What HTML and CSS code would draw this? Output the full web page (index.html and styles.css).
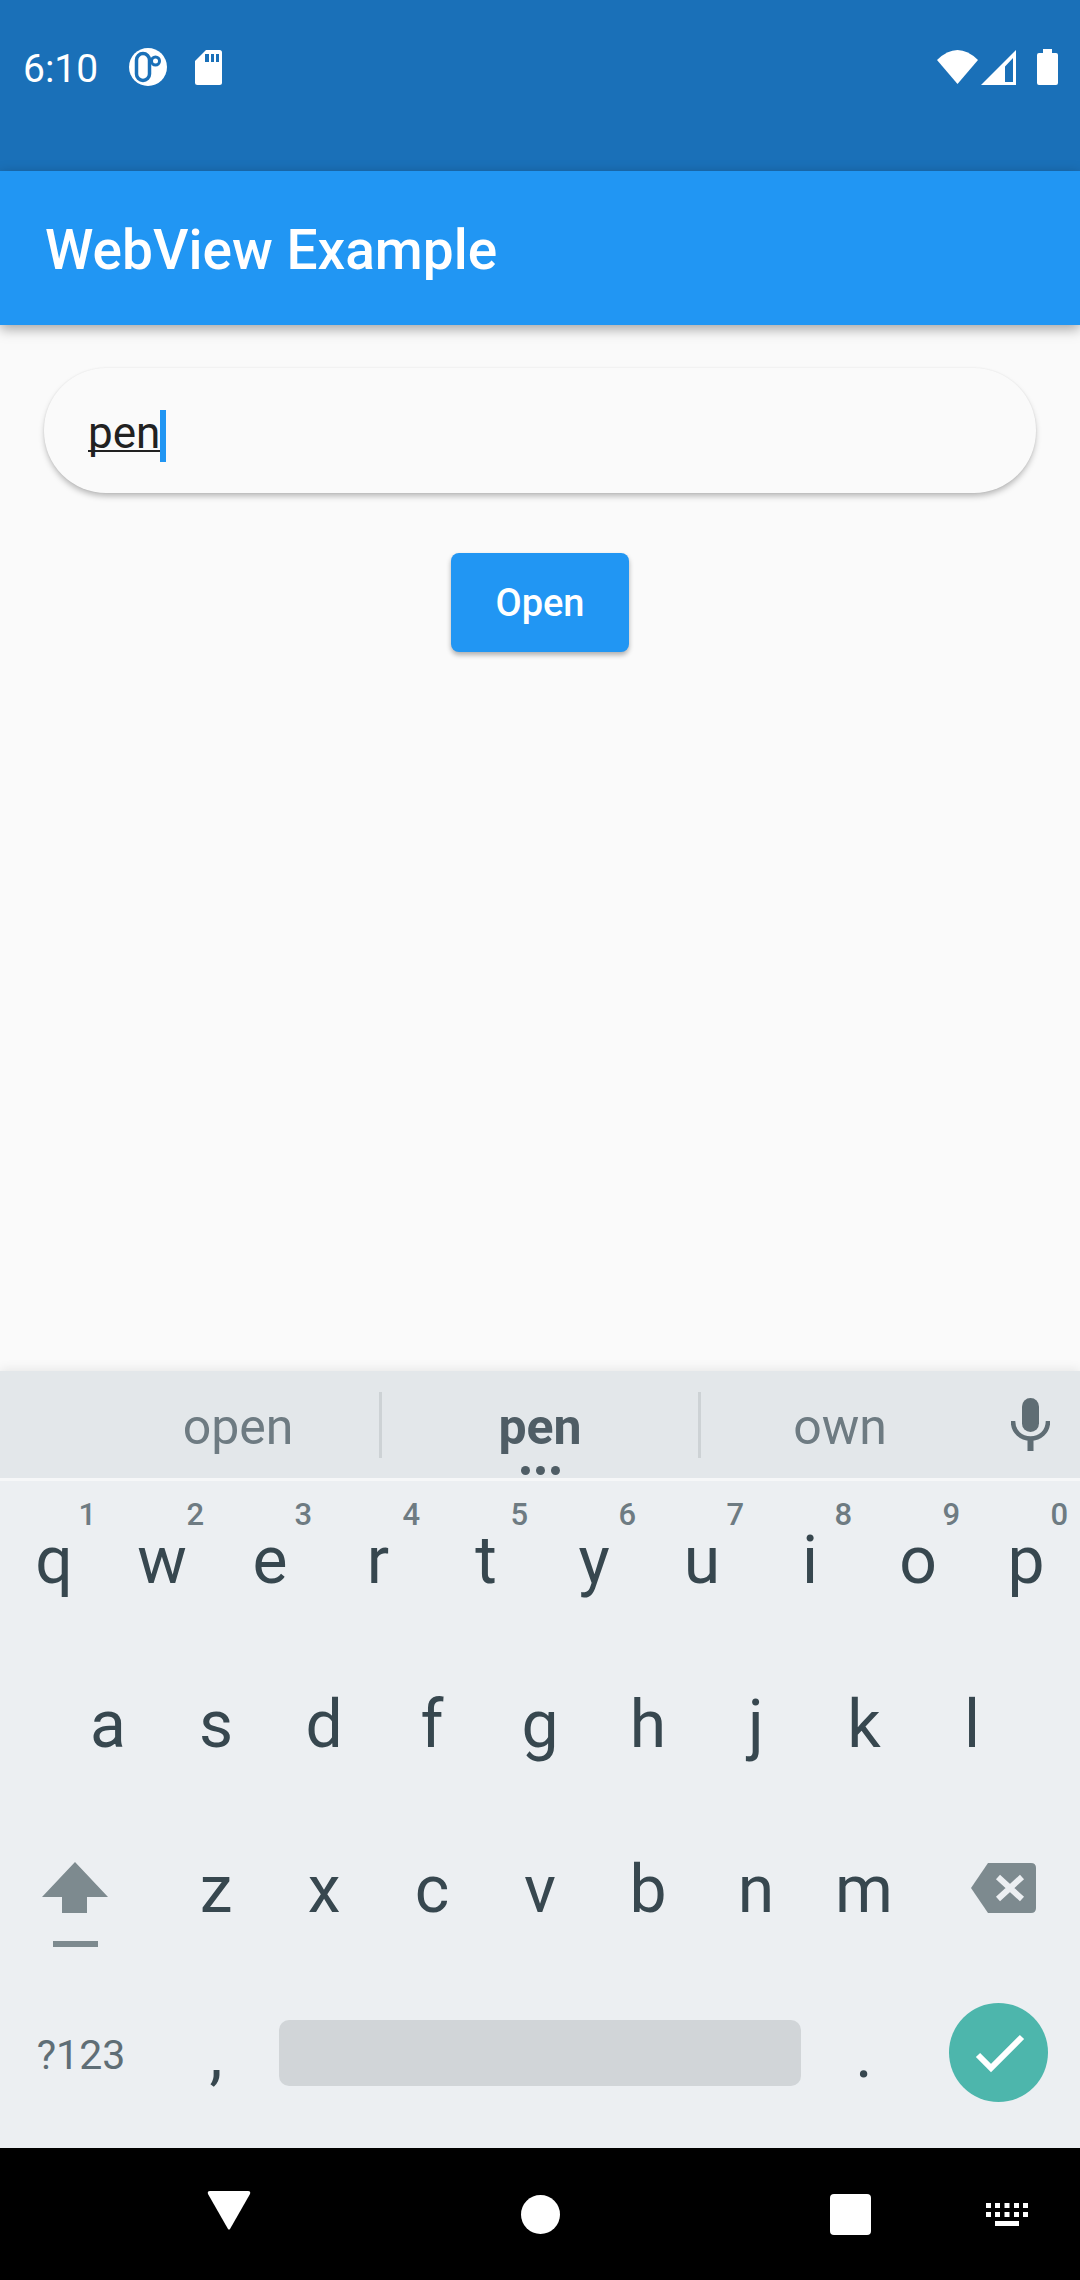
FILE: index.html
```html
<!DOCTYPE html>
<html>
<head>
<title>WebView Example</title>
<meta charset="UTF-8">
<link rel="stylesheet" href="styles.css">
</head>
<body>
<div class="screen">

<header class="statusbar">
  <span class="clock">6:10</span>
  <svg class="st-app" width="38" height="38" viewBox="0 0 38 38">
    <circle cx="19" cy="19" r="19" fill="#fff"/>
    <rect x="7.500" y="5.500" width="13" height="27" rx="6.500" fill="#fff" stroke="#1a70b8" stroke-width="3.500"/>
    <circle cx="26.500" cy="13" r="5.500" fill="#1a70b8"/>
    <circle cx="26.500" cy="13" r="2.500" fill="#fff"/>
  </svg>
  <svg class="st-sd" width="27" height="35" viewBox="0 0 27 35">
    <path d="M11 0H24.500Q27 0 27 2.500V32.500Q27 35 24.500 35H2.500Q0 35 0 32.500V11Z" fill="#fff"/>
    <path d="M10 4h4v8h-4zM16 4h3v8h-3zM21 4h3v8h-3z" fill="#1a70b8"/>
  </svg>
  <span class="spacer"></span>
  <svg class="st-wifi" width="41" height="34" viewBox="0 0 41 34">
    <path d="M0 10Q20.500 -10 41 10L20.500 34Z" fill="#fff"/>
  </svg>
  <svg class="st-signal" width="35" height="35" viewBox="0 0 35 35">
    <path fill-rule="evenodd" d="M35 0V35H0ZM32 8L24 16.500V32H32Z" fill="#fff"/>
  </svg>
  <svg class="st-batt" width="21" height="36" viewBox="0 0 21 36">
    <path d="M6 0H15V4H19Q21 4 21 6V34Q21 36 19 36H2Q0 36 0 34V6Q0 4 2 4H6Z" fill="#fff"/>
  </svg>
</header>

<div class="appbar">WebView Example</div>

<main class="content">
  <div class="searchbox"><span class="typed">pen</span><span class="caret"></span></div>
  <div class="btn-open">Open</div>
</main>

<section class="keyboard">
  <div class="suggestions">
    <div class="sug sug-first">open</div>
    <div class="sug sug-main">pen<span class="dots"><i></i><i></i><i></i></span></div>
    <div class="sug sug-last">own</div>
    <svg class="mic" width="39" height="53" viewBox="0 0 39 53">
      <rect x="11" y="0" width="17" height="34" rx="8.500" fill="#5f6d74"/>
      <path d="M2 23C2 34 10 40.500 19.500 40.500S37 34 37 23" fill="none" stroke="#5f6d74" stroke-width="4.500"/>
      <rect x="16.500" y="40" width="6" height="13" fill="#5f6d74"/>
    </svg>
  </div>
  <div class="keys">
    <div class="row row-top">
      <div class="key">q<b>1</b></div><div class="key">w<b>2</b></div><div class="key">e<b>3</b></div><div class="key">r<b>4</b></div><div class="key">t<b>5</b></div><div class="key">y<b>6</b></div><div class="key">u<b>7</b></div><div class="key">i<b>8</b></div><div class="key">o<b>9</b></div><div class="key">p<b>0</b></div>
    </div>
    <div class="row">
      <div class="key">a</div><div class="key">s</div><div class="key">d</div><div class="key">f</div><div class="key">g</div><div class="key">h</div><div class="key">j</div><div class="key">k</div><div class="key">l</div>
    </div>
    <div class="row">
      <div class="key key-wide">
        <svg class="shift" width="66" height="85" viewBox="0 0 66 85">
          <path d="M33 0L66 35H45V51H20V35H0Z" fill="#7d8a8f"/>
          <rect x="11" y="79" width="45" height="6" fill="#7d8a8f"/>
        </svg>
      </div>
      <div class="key">z</div><div class="key">x</div><div class="key">c</div><div class="key">v</div><div class="key">b</div><div class="key">n</div><div class="key">m</div>
      <div class="key key-wide">
        <svg class="backspace" width="65" height="50" viewBox="0 0 65 50">
          <path d="M17 0H60Q65 0 65 5V45Q65 50 60 50H17L0 25Z" fill="#7d8a8f"/>
          <path d="M27 14L51 36M51 14L27 36" stroke="#eceff2" stroke-width="6" fill="none"/>
        </svg>
      </div>
    </div>
    <div class="row">
      <div class="key key-wide key-sym">?123</div>
      <div class="key">,</div>
      <div class="key key-space"><span class="spacebar"></span></div>
      <div class="key">.</div>
      <div class="key key-wide">
        <svg class="enter" width="99" height="99" viewBox="0 0 99 99">
          <circle cx="49.500" cy="49.500" r="49.500" fill="#4db6ac"/>
          <path d="M29 52L42 65L73 34" fill="none" stroke="#fff" stroke-width="6"/>
        </svg>
      </div>
    </div>
  </div>
</section>

<nav class="navbar">
  <svg class="nav-back" width="44" height="39" viewBox="0 0 44 39"><path d="M3 0H41Q44 0 43 3L23 38Q22 39 21 38L1 3Q0 0 3 0Z" fill="#fff"/></svg>
  <svg class="nav-home" width="39" height="39" viewBox="0 0 39 39"><circle cx="19.500" cy="19.500" r="19.500" fill="#fff"/></svg>
  <svg class="nav-recent" width="41" height="41" viewBox="0 0 41 41"><rect width="41" height="41" rx="4" fill="#fff"/></svg>
  <svg class="nav-kbd" width="42" height="23" viewBox="0 0 42 23">
    <g fill="#fff">
      <path d="M0 0h5v5H0zM9 0h5v5H9zM18.500 0h5v5h-5zM28 0h5v5h-5zM37 0h5v5h-5z"/>
      <path d="M0 9h5v5H0zM9 9h5v5H9zM18.500 9h5v5h-5zM28 9h5v5h-5zM37 9h5v5h-5z"/>
      <rect x="9" y="18" width="24" height="5"/>
    </g>
  </svg>
</nav>

</div>
</body>
</html>
```

FILE: styles.css
```css
html, body { margin: 0; padding: 0; }
body { font-family: Roboto, "Noto Sans", sans-serif; background: #fafafa; }
.screen { width: 1080px; height: 2280px; display: flex; flex-direction: column; overflow: hidden; }

.statusbar { height: 171px; box-sizing: border-box; background: #1a70b8; display: flex; align-items: flex-start; padding: 48px 22px 0 23px; color: #fff; flex: none; }
.clock { font-size: 39px; line-height: 43px; width: 75px; }
.st-app { margin-left: 31px; }
.st-sd { margin-left: 28px; margin-top: 2px; }
.spacer { flex: 1; }
.st-wifi { margin-top: 2px; }
.st-signal { margin-left: 3px; margin-top: 2px; }
.st-batt { margin-left: 21px; margin-top: 1px; }

.appbar { height: 154px; flex: none; box-sizing: border-box; background: #2196f3; color: #fff; font-size: 55px; font-weight: 500; line-height: 158px; padding-left: 45px; box-shadow: 0 4px 12px rgba(0,0,0,.35); position: relative; z-index: 1; }

.content { flex: 1; display: flex; flex-direction: column; align-items: center; padding: 43px 44px 0; background: #fafafa; }
.searchbox { width: 100%; height: 125px; box-sizing: border-box; padding: 11px 0 0 44px; border-radius: 62px; background: #fafafa; box-shadow: 0 4px 6px -1px rgba(0,0,0,.28), 0 0 2px rgba(0,0,0,.08); display: flex; align-items: center; }
.typed { font-size: 44px; color: #212121; margin-bottom: 6px; text-decoration: underline; text-decoration-skip-ink: none; text-decoration-thickness: 2px; text-underline-offset: 2px; }
.caret { width: 6px; height: 52px; background: #2196f3; }
.btn-open { margin-top: 60px; width: 178px; height: 99px; border-radius: 8px; background: #2196f3; color: #fff; font-size: 38px; font-weight: 500; display: flex; align-items: center; justify-content: center; box-shadow: 0 3px 5px rgba(0,0,0,.3); }

.keyboard { flex: none; background: #eceff2; box-shadow: 0 -2px 10px rgba(0,0,0,.08); position: relative; }
.suggestions { height: 107px; background: #e3e7ea; display: flex; align-items: center; border-bottom: 3px solid #f6f7f8; padding-left: 97px; }
.sug { height: 66px; line-height: 70px; text-align: center; font-size: 50px; color: #6e7b82; }
.sug-first { width: 282px; border-right: 3px solid #cdd2d5; }
.sug-main { width: 316px; font-weight: 700; color: #4f5d65; position: relative; }
.sug-last { width: 278px; border-left: 3px solid #cdd2d5; }
.dots { position: absolute; left: 0; right: 0; bottom: -17px; display: flex; justify-content: center; gap: 6px; line-height: 0; }
.dots i { width: 9px; height: 9px; border-radius: 50%; background: #4f5d65; }
.mic { margin-left: 32px; }

.keys { display: grid; grid-template-rows: 159px repeat(3, 165px); height: 667px; box-sizing: border-box; padding-bottom: 13px; }
.row { display: flex; justify-content: center; }
.key { width: 108px; flex: none; box-sizing: border-box; padding-top: 4px; display: flex; align-items: center; justify-content: center; font-size: 66px; color: #37474f; position: relative; }
.row-top .key { padding-top: 0; }
.key b { position: absolute; right: 12px; top: 18px; font-size: 31px; line-height: 31px; font-weight: 500; color: #6e7b82; }
.key-wide { width: 162px; }
.key-sym { font-size: 41px; color: #5f6e76; }
.key-space { width: 540px; }
.spacebar { width: 522px; height: 66px; margin-top: -4px; border-radius: 10px; background: #d1d5d8; }
.shift { margin: 30px 12px 0 0; }
.backspace { margin: -4px 0 0 8px; }
.enter { margin: -4px 1px 0 0; }

.navbar { height: 132px; flex: none; background: #000; display: flex; align-items: flex-start; padding-left: 207px; }
.nav-back { margin-top: 43px; }
.nav-home { margin-top: 47px; margin-left: 270px; }
.nav-recent { margin-top: 46px; margin-left: 270px; }
.nav-kbd { margin-top: 55px; margin-left: 115px; }
```
